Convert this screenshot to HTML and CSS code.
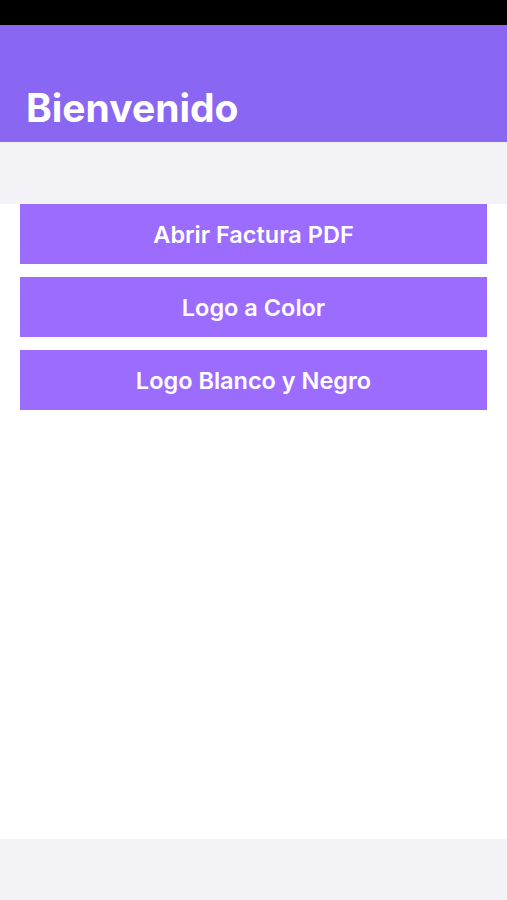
FILE: index.html
```html
<!DOCTYPE html>
<html lang="es">
<head>
    <meta charset="UTF-8">
    <meta name="viewport" content="width=device-width, initial-scale=1.0">
    <title>Bienvenido</title>
    <link rel="stylesheet" href="styles.css">
</head>
<body>
    <div class="status-bar"></div>
    <header class="nav-header">
        <h1>Bienvenido</h1>
    </header>
    <div class="search-band"></div>
    <main class="content">
        <button class="action-btn">Abrir Factura PDF</button>
        <button class="action-btn">Logo a Color</button>
        <button class="action-btn">Logo Blanco y Negro</button>
    </main>
    <footer class="tab-bar"></footer>
</body>
</html>
```

FILE: styles.css
```css
html, body {
    margin: 0;
    padding: 0;
}
body {
    font-family: Inter, "Noto Sans", sans-serif;
    height: 900px;
    display: flex;
    flex-direction: column;
    background-color: #ffffff;
}
.status-bar {
    height: 25px;
    background-color: #000000;
}
.nav-header {
    height: 117px;
    background-color: #8967f2;
    display: flex;
    align-items: flex-end;
    padding: 0 26px;
    box-sizing: border-box;
}
.nav-header h1 {
    margin: 0 0 11px 0;
    color: #ffffff;
    font-size: 39px;
    font-weight: 700;
    line-height: 46px;
}
.search-band {
    height: 62px;
    background-color: #f2f2f7;
}
.content {
    flex: 1;
    display: flex;
    flex-direction: column;
    gap: 13px;
    padding: 0 20px;
}
.action-btn {
    height: 60px;
    border: none;
    background-color: #9c6cfe;
    color: #ffffff;
    font-family: Inter, "Noto Sans", sans-serif;
    font-size: 23.5px;
    font-weight: 600;
    cursor: pointer;
}
.tab-bar {
    height: 61px;
    background-color: #f2f2f7;
}
```
